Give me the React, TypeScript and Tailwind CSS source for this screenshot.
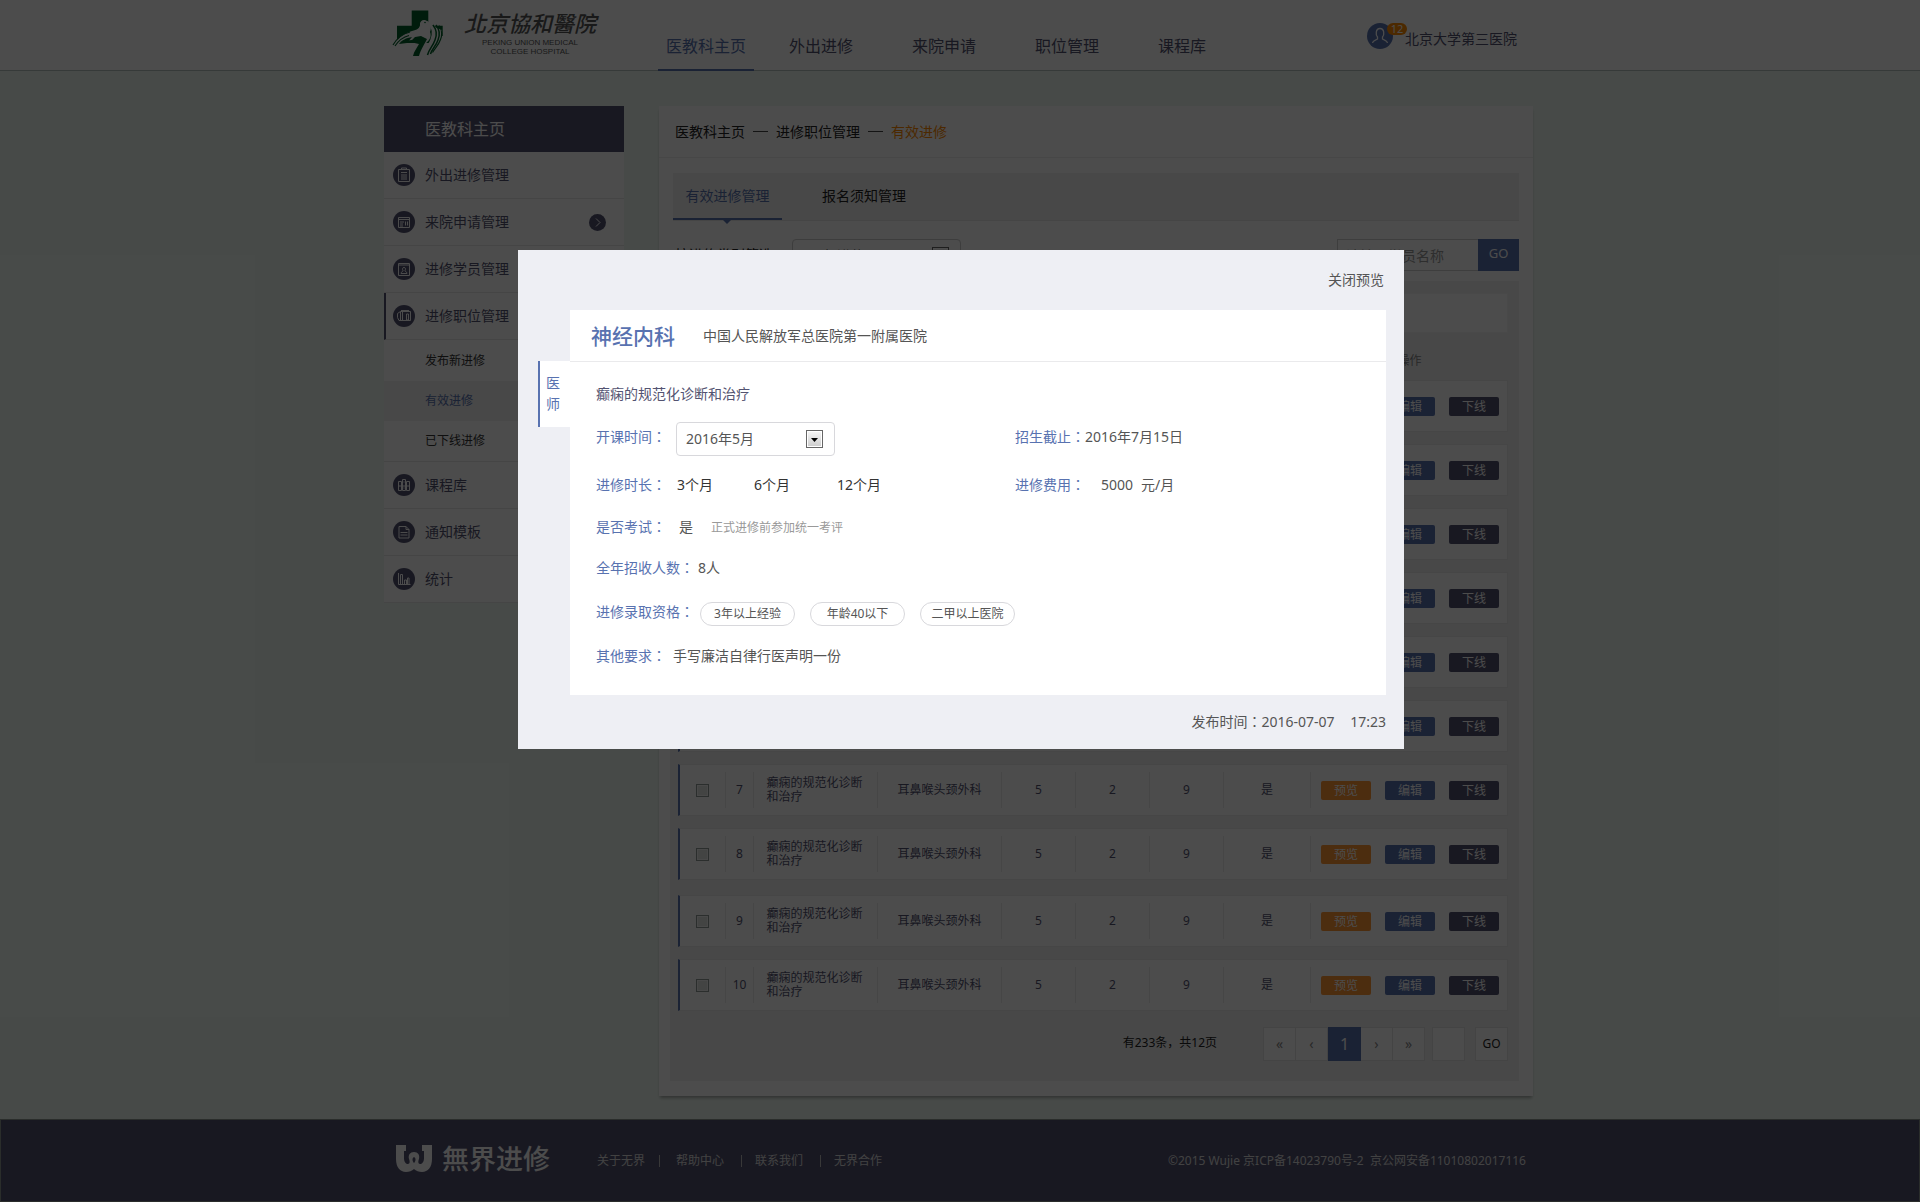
import React from "react";

const FONT = "font-['Noto_Sans','Noto_Sans_CJK_SC',sans-serif]";

function Colon() {
  return <span className="inline-block font-['Noto_Sans_CJK_TC',sans-serif] leading-none">：</span>;
}

function Logo() {
  return (
    <a href="#home" aria-label="北京协和医院" className="flex pl-2">
      <svg width="52" height="50" viewBox="0 0 52 50" className="mt-2">
        <path d="M19.700 2.500h16.600v15.200h14.400V28l-3 7H12l-7-4V17.700h14.700z" fill="#00602a" />
        <path d="M38 17c4 5 4 11 1 17-3 5-6 8-7 14h10l10-10V28h-3l1-6z" fill="#fff" />
        <path d="M0 40c4-9 10-14 20-17 5-1 8-3 8-6 0-3 3-5 6-4 5 1 6 6 4 11 2 5-1 9-5 12L20 32c-8 0-12 3-16 8z" fill="#fff" />
        <path d="M23 29l6-1 6 3c-3 6-6 10-8 17h-6c1-5 4-8 6-12l-9-2z" fill="#00602a" />
        <path d="M28 16c0-3 3-5 6-3.500 3 1 4 4 3.500 7 0 6-3.500 8.500-8.500 8.500C20 28 14 29 7 36c2-7 8-11 14-12.500 5-1 7.500-3.500 7-7.500z" fill="#fff" />
        <path d="M37 13c7 4 9 12 6.500 19-2 6-7 9-8 15" stroke="#fff" strokeWidth="1.200" fill="none" />
        <path d="M37.500 15c4 5 4 12 2 17-2 5-6 9-7 15" stroke="#fff" strokeWidth="2.400" fill="none" />
        <path d="M41 17c4 5 4 10 2 15-2 6-6 9-7.500 15" stroke="#00602a" strokeWidth="1.500" fill="none" />
        <path d="M44 17c4 5 4 10 2 15-2 6-6 9-7.500 14" stroke="#00602a" strokeWidth="1.500" fill="none" />
        <path d="M47 17.500c3.500 5 3.500 9 1.500 14-2 6-6 9-8 13" stroke="#00602a" strokeWidth="1.200" fill="none" />
        <path d="M1 37c4-7 9-11 17-13M3 38c4-6 8-9 14-10.500" stroke="#00602a" strokeWidth="1.200" fill="none" />
        <path d="M7 36c3-4 7-6 13-7l-5 6z" fill="#00602a" />
        <circle cx="33" cy="14.500" r=".8" fill="#00602a" />
      </svg>
      <span className="ml-5 mt-2 flex flex-col items-center text-[#555]">
        <span className="font-['Noto_Sans_CJK_TC',sans-serif] text-[22px] font-medium italic leading-[28px]">北京協和醫院</span>
        <span className="pt-0.5 text-center font-['Liberation_Sans',sans-serif] text-[8px] leading-[9px]">
          PEKING UNION MEDICAL
          <br />
          COLLEGE HOSPITAL
        </span>
      </span>
    </a>
  );
}

function Header() {
  const nav = ["医教科主页", "外出进修", "来院申请", "职位管理", "课程库"];
  return (
    <header className="border-b border-[#b5c4be] bg-white">
      <div className="mx-auto flex h-[70px] max-w-[1152px]">
        <div className="w-[274px] shrink-0">
          <Logo />
        </div>
        <nav className="flex flex-1 gap-[27px]">
          {nav.map((n, i) => (
            <a
              key={n}
              href={`#nav-${i}`}
              className={
                i === 0
                  ? "-mb-px w-24 whitespace-nowrap border-b-2 border-[#5872b0] px-2 pt-9 text-base leading-5 text-[#5872b0]"
                  : "w-24 whitespace-nowrap px-2 pt-9 text-base leading-5 text-[#535371]"
              }
            >
              {n}
            </a>
          ))}
        </nav>
        <a href="#account" className="mr-[19px] flex items-start pt-[23px]">
          <span className="relative block">
            <svg width="26" height="26" viewBox="0 0 26 26">
              <circle cx="13" cy="13" r="13" fill="#5872b0" />
              <path d="M5.500 20c.5-3 3-2.500 5-4v-2c-2-2-2-8.500 2.500-8.500S17.500 12 15.500 14v2c2 1.500 4.500 1 5 4" fill="none" stroke="#fff" strokeWidth="1.300" />
            </svg>
            <span className="absolute left-5 top-0 w-5 rounded-full bg-[#ff8a00] text-center text-[11px] leading-[12px] text-white">12</span>
          </span>
          <span className="ml-3 mt-1.5 text-sm leading-5 text-[#535371]">北京大学第三医院</span>
        </a>
      </div>
    </header>
  );
}

type IconName = "clip" | "form" | "person" | "book" | "lib" | "doc" | "stat";

function MenuIcon({ name }: { name: IconName }) {
  return (
    <svg width="22" height="22" viewBox="0 0 22 22" className="shrink-0">
      <circle cx="11" cy="11" r="11" fill="#535371" />
      <g fill="none" stroke="#fff" strokeWidth="1">
        {name === "clip" && <path d="M5.500 5.500h11v12h-11zM8.500 5.500v-1.500h5v1.500zM8 8.500h6M8 11h6M8 13h6M8 15h6" />}
        {name === "form" && <path d="M5.500 6.500h11v10h-11zM5.500 8.500h11M7 11h4M7 13h3M12.500 10.500v4M14.500 10.500v4M7 15h3" />}
        {name === "person" && (
          <path d="M5.500 5.500h11v12h-11zM5.500 7h11M8 15.500c0-2 2-1.500 2-3-1-1.500-.5-3 1-3s2 1.500 1 3c0 1.500 2 1 2 3z" />
        )}
        {name === "book" && <path d="M7.500 6.500h10v9h-10zM7.500 6.500l-3 2v4l1.500 3h3M9.500 7v8M13.500 9h2v6h-2zM8 5.500h8" />}
        {name === "lib" && <path d="M5.500 7.500h3v9h-3zM9.500 5.500h3v11h-3zM13.500 7.500h3v9h-3zM5.500 12h11M10.500 8h1M10.500 14h1" />}
        {name === "doc" && <path d="M6 5.500h7l3 3v8.500H6zM13 5.500v3h3M7.500 11.500h7M7.500 14h7" />}
        {name === "stat" && <path d="M5.500 5v11.500h12M7.500 16V6.500h2V16M11.500 16v-4h2v4M14.500 16v-6h1.500v6" />}
      </g>
    </svg>
  );
}

function MenuItem({ icon, label, active, arrow }: { icon: IconName; label: string; active?: boolean; arrow?: boolean }) {
  return (
    <a
      href={`#${icon}`}
      className={
        active
          ? "flex h-[47px] items-center border-b border-l-2 border-[#e6e6e6] border-l-[#535371] pl-[7px] pr-[18px]"
          : "flex h-[47px] items-center border-b border-[#e6e6e6] pl-[9px] pr-[18px]"
      }
    >
      <MenuIcon name={icon} />
      <span className="ml-2.5 text-sm leading-5 text-[#535371]">{label}</span>
      {arrow && (
        <svg width="17" height="17" viewBox="0 0 17 17" className="ml-auto">
          <circle cx="8.500" cy="8.500" r="8.500" fill="#535371" />
          <path d="M7 4.500l4 4-4 4" fill="none" stroke="#fff" strokeWidth="1" />
        </svg>
      )}
    </a>
  );
}

function Sidebar() {
  return (
    <aside className="w-60 shrink-0 self-start bg-white">
      <h2 className="bg-[#535371] pl-[41px] text-base leading-[46px] text-white">医教科主页</h2>
      <MenuItem icon="clip" label="外出进修管理" />
      <MenuItem icon="form" label="来院申请管理" arrow />
      <MenuItem icon="person" label="进修学员管理" />
      <MenuItem icon="book" label="进修职位管理" active />
      <div className="border-b border-[#e6e6e6] pt-px text-xs text-[#333]">
        <a href="#new" className="block pl-[41px] leading-10">发布新进修</a>
        <a href="#valid" className="block bg-[#f0f0f0] pl-[41px] leading-10 text-[#5872b0]">有效进修</a>
        <a href="#offline" className="block pl-[41px] leading-10">已下线进修</a>
      </div>
      <MenuItem icon="lib" label="课程库" />
      <MenuItem icon="doc" label="通知模板" />
      <MenuItem icon="stat" label="统计" />
    </aside>
  );
}

function ArrowBox() {
  return (
    <svg width="17" height="18" viewBox="0 0 17 18" className="pointer-events-none absolute right-3 top-2">
      <defs>
        <linearGradient id="arrow-face" x1="0" y1="0" x2="0" y2="1">
          <stop offset="0" stopColor="#f4f4f4" />
          <stop offset="1" stopColor="#cfcfcf" />
        </linearGradient>
      </defs>
      <rect x=".5" y=".5" width="16" height="17" fill="#fff" stroke="#666" />
      <rect x="2" y="2" width="13" height="14" fill="url(#arrow-face)" />
      <path d="M5 8h7l-3.500 4z" fill="#000" />
    </svg>
  );
}

const CELL = "h-[52px] border-y border-[#ebebeb] bg-white flex items-center";
const INNER = "flex h-9 w-full items-center justify-center border-r border-[#ebebeb]";
const BTN = "h-[19px] w-[50px] rounded-xs text-xs leading-[19px] text-white";

function Row({ n }: { n: number }) {
  const pad = n === 8 ? "p-0 pb-[15px]" : "p-0 pb-3";
  return (
    <tr>
      <td className={pad}>
        <div className={`${CELL} border-l-2 border-l-[#5872b0]`}>
          <div className={INNER}>
            <input
              type="checkbox"
              aria-label={`选择第${n}条`}
              className="block size-[13px] appearance-none border border-[#8f9a96] bg-[#dfe5e2] shadow-[inset_0_0_0_1px_#f4f4f4]"
            />
          </div>
        </div>
      </td>
      <td className={pad}>
        <div className={CELL}>
          <div className={INNER}>{n}</div>
        </div>
      </td>
      <td className={pad}>
        <div className={CELL}>
          <div className={`${INNER} leading-[14px]`}>
            <span className="w-[98px]">癫痫的规范化诊断和治疗</span>
          </div>
        </div>
      </td>
      {["耳鼻喉头颈外科", "5", "2", "9", "是"].map((t, i) => (
        <td key={i} className={pad}>
          <div className={CELL}>
            <div className={INNER}>{t}</div>
          </div>
        </td>
      ))}
      <td className={pad}>
        <div className={`${CELL} justify-between border-r pl-2.5 pr-2`}>
          <button className={`${BTN} bg-[#ff9632]`}>预览</button>
          <button className={`${BTN} bg-[#5872b0]`}>编辑</button>
          <button className={`${BTN} bg-[#535371]`}>下线</button>
        </div>
      </td>
    </tr>
  );
}

function List() {
  const heads = ["", "序号", "课程名称", "进修科室", "报名", "录取", "人数", "考试", "操作"];
  const page = "flex w-8 items-center justify-center border-r border-[#e4e4e4] bg-white text-[#888]";
  return (
    <div className="-ml-[3px] bg-[#f2f2f2] pb-5 pl-2 pr-[11px] pt-3">
      <div className="h-10 border border-[#f5f5f5] bg-white" />
      <table className="w-full table-fixed border-separate border-spacing-0 text-xs text-[#535371]">
        <colgroup>
          <col className="w-12" />
          <col className="w-7" />
          <col className="w-[124px]" />
          <col className="w-[124px]" />
          <col className="w-[74px]" />
          <col className="w-[74px]" />
          <col className="w-[74px]" />
          <col className="w-[87px]" />
          <col />
        </colgroup>
        <thead>
          <tr className="h-[47px] text-[#888]">
            {heads.map((h, i) => (
              <th key={i} className="p-0 pt-2 font-normal">
                {h}
              </th>
            ))}
          </tr>
        </thead>
        <tbody>
          {[1, 2, 3, 4, 5, 6, 7, 8, 9, 10].map((n) => (
            <Row key={n} n={n} />
          ))}
        </tbody>
      </table>
      <div className="mt-1 flex h-[34px] justify-end text-xs">
        <p className="mr-[46px] leading-8 text-[#222]">有233条，共12页</p>
        <nav aria-label="分页" className="flex border border-r-0 border-[#e4e4e4] text-sm">
          <a href="#first" className={page}>«</a>
          <a href="#prev" className={page}>‹</a>
          <a href="#p1" aria-current="page" className="-my-px flex w-[33px] items-center justify-center bg-[#5872b0] text-base text-white">1</a>
          <a href="#next" className={page}>›</a>
          <a href="#last" className={page}>»</a>
        </nav>
        <input type="text" aria-label="页码" className="ml-[7px] w-[33px] border border-[#e4e4e4] bg-white" />
        <button className="ml-2.5 w-[33px] border border-[#e4e4e4] bg-white text-xs text-[#222]">GO</button>
      </div>
    </div>
  );
}

function Main() {
  return (
    <main className="min-w-0 flex-1 bg-white shadow-[0_3px_3px_-1px_rgba(0,0,0,0.3)]">
      <nav aria-label="位置" className="flex h-[52px] items-center gap-2 border-b border-[#efefef] px-4 text-sm leading-5 text-[#222]">
        <a href="#home">医教科主页</a>
        <span className="h-px w-[15px] bg-[#444]" />
        <a href="#positions">进修职位管理</a>
        <span className="h-px w-[15px] bg-[#444]" />
        <span className="text-[#ff8a00]">有效进修</span>
      </nav>
      <div className="px-3.5 pb-[15px] pt-[15px]">
        <div className="flex h-12 border-b border-[#e8e8e8] bg-[#f2f2f2] text-sm">
          <button className="relative w-[109px] border-b-2 border-[#5872b0] text-[#5872b0]">
            有效进修管理
            <span className="absolute left-[50px] top-[47px] border-x-4 border-t-4 border-x-transparent border-t-[#5872b0]" />
          </button>
          <button className="ml-[17px] w-[130px] pb-0.5 text-[#222]">报名须知管理</button>
        </div>
        <div className="flex h-[60px] items-start pt-[18px] text-sm">
          <label htmlFor="kind" className="pl-0.5 leading-8 text-[#222]">
            按进修类别筛选
          </label>
          <div className="relative ml-[19px]">
            <select id="kind" className="h-[33px] w-[169px] appearance-none rounded-sm border border-[#ccc] pl-4 text-sm text-[#333]">
              <option>医师进修</option>
            </select>
            <ArrowBox />
          </div>
          <form className="ml-auto flex">
            <input
              type="text"
              aria-label="学员名称"
              placeholder="请输入学员名称"
              className="h-8 w-[141px] border border-r-0 border-[#d0d0d0] pl-2 text-sm placeholder:text-[#999]"
            />
            <button type="button" className="w-[41px] bg-[#5872b0] pb-1 text-[13px] text-white">GO</button>
          </form>
        </div>
        <List />
      </div>
    </main>
  );
}

function Footer() {
  return (
    <footer className="border border-[#8d9792] bg-[#535371] text-xs text-[#ddd]">
      <div className="mx-auto flex h-[81px] max-w-[1152px] items-center pl-3 pr-2.5">
        <svg width="36" height="27" viewBox="0 0 36 27" className="mb-1 shrink-0">
          <path
            d="M0 0h10v6h-2v7c0 4 2 6 4 6 2 0 2-3 1-5-1-4 1-7 5-7s6 3 5 7c-1 2-1 5 1 5 2 0 4-2 4-6V6h-2V0h10v14c0 8-4 13-10 13-3 0-6-1-8-3-2 2-5 3-8 3C4 27 0 22 0 14zM18 12c-2 1-2 4 0 6 2-2 2-5 0-6z"
            fill="#fff"
            fillRule="evenodd"
          />
        </svg>
        <span className="mb-1.5 ml-2.5 font-['Noto_Sans_CJK_SC',sans-serif] text-[27px] font-medium leading-8 text-white">無界进修</span>
        <nav className="ml-[47px] flex items-center leading-5">
          <a href="#about">关于无界</a>
          <span className="ml-[14px] mr-4 h-3 w-px bg-[#bbb]" />
          <a href="#help">帮助中心</a>
          <span className="ml-[17px] mr-[13px] h-3 w-px bg-[#bbb]" />
          <a href="#contact">联系我们</a>
          <span className="ml-[17px] mr-[13px] h-3 w-px bg-[#bbb]" />
          <a href="#partner">无界合作</a>
        </nav>
        <p className="ml-auto whitespace-pre leading-5">©2015 Wujie 京ICP备14023790号-2  京公网安备11010802017116</p>
      </div>
    </footer>
  );
}

function Label({ children }: { children: React.ReactNode }) {
  return (
    <span className="text-[#5872b0]">
      {children}
      <Colon />
    </span>
  );
}

function Preview() {
  return (
    <section role="dialog" aria-label="预览" className="flex w-[886px] flex-col self-start bg-[#eeeff4] pl-5 pr-[18px] text-sm leading-5 text-[#555]">
      <button className="mr-0.5 mt-5 self-end">关闭预览</button>
      <div className="mt-5 flex items-start">
        <div className="mt-[51px] flex w-8 flex-col border-l-2 border-[#5872b0] bg-white pb-[13px] pl-1.5 pt-[11px] leading-[21px] text-[#5872b0]">
          <span>医</span>
          <span>师</span>
        </div>
        <article className="flex-1 bg-white pb-[29px]">
          <header className="flex h-[52px] items-center border-b border-[#eaeaec] pl-[21px]">
            <h1 className="text-[21px] font-medium leading-7 text-[#5872b0]">神经内科</h1>
            <p className="ml-7">中国人民解放军总医院第一附属医院</p>
          </header>
          <div className="pl-[26px] pt-[22px]">
            <h2 className="text-[#535371]">癫痫的规范化诊断和治疗</h2>
            <div className="mt-[18px] flex h-[34px] leading-[30px]">
              <div className="flex w-[419px]">
                <label htmlFor="start" className="mr-[10px] text-[#5872b0]">
                  开课时间
                  <Colon />
                </label>
                <div className="relative">
                  <select id="start" className="h-[34px] w-[159px] appearance-none rounded border border-[#d8d8dc] bg-white pl-[9px] text-sm text-[#555]">
                    <option>2016年5月</option>
                  </select>
                  <ArrowBox />
                </div>
              </div>
              <p>
                <Label>招生截止</Label>2016年7月15日
              </p>
            </div>
            <div className="mt-[19px] flex">
              <div className="flex w-[419px] text-[#333]">
                <Label>进修时长</Label>
                <span className="ml-[11px] w-[77px]">3个月</span>
                <span className="w-[83px]">6个月</span>
                <span>12个月</span>
              </div>
              <p>
                <Label>进修费用</Label>
                <span className="ml-4">5000</span>
                <span className="ml-2">元/月</span>
              </p>
            </div>
            <p className="mt-[22px] flex">
              <Label>是否考试</Label>
              <span className="ml-[13px]">是</span>
              <span className="ml-[18px] text-xs leading-[22px] text-[#999]">正式进修前参加统一考评</span>
            </p>
            <p className="mt-[19px] flex">
              <Label>全年招收人数</Label>
              <span className="ml-1">8人</span>
            </p>
            <div className="mt-6 flex h-6">
              <Label>进修录取资格</Label>
              <ul className="ml-1.5 flex gap-[15px] text-xs leading-[22px]">
                {["3年以上经验", "年龄40以下", "二甲以上医院"].map((t) => (
                  <li key={t} className="w-[95px] rounded-full border border-[#d8d8dc] text-center">
                    {t}
                  </li>
                ))}
              </ul>
            </div>
            <p className="mt-5 flex">
              <Label>其他要求</Label>
              <span className="ml-[7px]">手写廉洁自律行医声明一份</span>
            </p>
          </div>
        </article>
      </div>
      <p className="mb-[17px] mt-[17px] self-end">
        发布时间
        <Colon />
        2016-07-07 <span className="ml-3">17:23</span>
      </p>
    </section>
  );
}

export default function App() {
  return (
    <div className={`relative flex min-h-screen flex-col bg-[#eff9f2] ${FONT}`}>
      <Header />
      <div className="mx-auto flex w-full max-w-[1152px] flex-1 items-start gap-[35px] pb-[23px] pr-[3px] pt-[35px]">
        <Sidebar />
        <Main />
      </div>
      <Footer />
      <div className="absolute inset-0 flex justify-center bg-black/70 pl-0.5 pt-[250px]">
        <Preview />
      </div>
    </div>
  );
}
